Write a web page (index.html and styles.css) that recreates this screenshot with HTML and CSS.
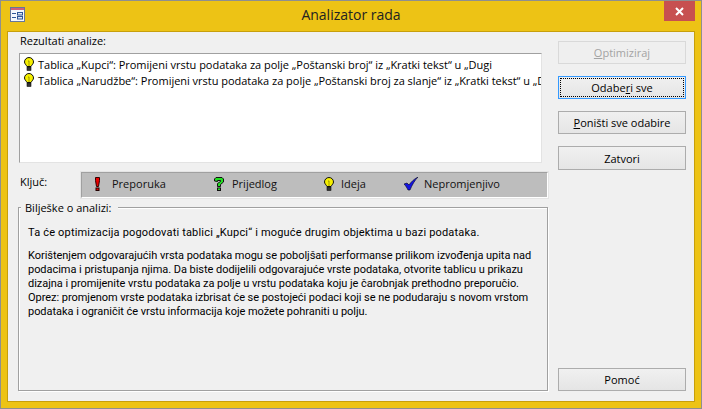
FILE: index.html
```html
<!DOCTYPE html>
<html lang="hr">
<head>
  <meta charset="UTF-8">
  <title>Analizator rada</title>
  <link rel="stylesheet" href="styles.css">
</head>
<body>

  <div class="window">
    <div class="title-bar">
      <svg class="app-icon" width="15" height="15" viewBox="0 0 15 15">
        <rect x="0.5" y="0.5" width="14" height="14" fill="#f4f7fc" stroke="#66779c"/>
        <rect x="1" y="1" width="13" height="2" fill="#d0607c"/>
        <path d="M2 6.500h4M2 10.500h4" stroke="#2f5597"/>
        <rect x="7.500" y="5.500" width="5" height="2.500" fill="#dfe8f5" stroke="#2f5597"/>
        <rect x="7.500" y="9.500" width="5" height="2.500" fill="#dfe8f5" stroke="#2f5597"/>
      </svg>
      <div class="title">Analizator rada</div>
      <div class="close-btn">
        <svg width="9" height="9" viewBox="0 0 9 9"><path d="M1 1l7 7M8 1l-7 7" stroke="#fff" stroke-width="2"/></svg>
      </div>
    </div>

    <div class="client">
      <div class="left">
        <div class="results-label">Rezultati analize:</div>
        <div class="list-box">
          <div class="list-row">
            <svg class="bulb" width="12" height="14" viewBox="0 0 12 14"><use href="#bulb"/></svg>
            <span>Tablica „Kupci“: Promijeni vrstu podataka za polje „Poštanski broj“ iz „Kratki tekst“ u „Dugi</span>
          </div>
          <div class="list-row">
            <svg class="bulb" width="12" height="14" viewBox="0 0 12 14"><use href="#bulb"/></svg>
            <span>Tablica „Narudžbe“: Promijeni vrstu podataka za polje „Poštanski broj za slanje“ iz „Kratki tekst“ u „D</span>
          </div>
        </div>

        <div class="key-row">
          <div class="key-label">Ključ:</div>
          <div class="key-bar">
            <div class="key-item item-1">
              <svg width="5" height="14" viewBox="0 0 5 14">
                <path d="M.5.5h4v3l-1 6h-2l-1-6z" fill="#e80000" stroke="#300"/>
                <rect x="1" y="11" width="3" height="2.500" fill="#e80000" stroke="#200"/>
              </svg>
              <span>Preporuka</span>
            </div>
            <div class="key-item item-2">
              <svg width="10" height="14" viewBox="0 0 10 14">
                <path d="M.5 4V2L2 .5h6L9.500 2v3L6.500 7.500v2h-3v-3L6.500 4.500v-1h-3v1z" fill="#22e022" stroke="#111"/>
                <rect x="3.500" y="11" width="3" height="2.500" fill="#22e022" stroke="#111"/>
              </svg>
              <span>Prijedlog</span>
            </div>
            <div class="key-item item-3">
              <svg width="12" height="14" viewBox="0 0 12 14"><use href="#bulb"/></svg>
              <span>Ideja</span>
            </div>
            <div class="key-item item-4">
              <svg width="14" height="14" viewBox="0 0 14 14">
                <path d="M0 7l3-1 2 2c2-3 5-6 9-8-3 3-6 8-8 13H4C3 11 2 9 0 7z" fill="#1414e0" stroke="#002" stroke-width="0.6"/>
              </svg>
              <span>Nepromjenjivo</span>
            </div>
          </div>
        </div>

        <div class="notes">
          <div class="notes-legend">Bilješke o analizi:</div>
          <p class="notes-lead">Ta će optimizacija pogodovati tablici „Kupci“ i moguće drugim objektima u bazi podataka.</p>
          <p>Korištenjem odgovarajućih vrsta podataka mogu se poboljšati performanse prilikom izvođenja upita nad podacima i pristupanja njima. Da biste dodijelili odgovarajuće vrste podataka, otvorite tablicu u prikazu dizajna i promijenite vrstu podataka za polje u vrstu podataka koju je čarobnjak prethodno preporučio. Oprez: promjenom vrste podataka izbrisat će se postojeći podaci koji se ne podudaraju s novom vrstom podataka i ograničit će vrstu informacija koje možete pohraniti u polju.</p>
        </div>
      </div>

      <div class="buttons">
        <button class="btn" disabled><u>O</u>ptimiziraj</button>
        <button class="btn focused"><span class="focus-ring">Odabe<u>r</u>i sve</span></button>
        <button class="btn"><u>P</u>oništi sve odabire</button>
        <button class="btn btn-close">Zatvori</button>
        <button class="btn btn-help">Pomoć</button>
      </div>
    </div>
  </div>

  <svg width="0" height="0" class="defs">
    <symbol id="bulb" viewBox="0 0 12 14">
      <path d="M6 .5a4.500 4.500 0 0 0-4.500 4.500c0 1.700 1.500 2.600 2.500 4.500h4c1-1.900 2.500-2.800 2.500-4.500A4.500 4.500 0 0 0 6 .5z" fill="#f6f000" stroke="#111"/>
      <rect x="4" y="10" width="4" height="3.500" fill="#333" stroke="#111" stroke-width="0.6"/>
      <path d="M5 4h1v5" stroke="#8a8400" fill="none" stroke-width="0.8"/>
    </symbol>
  </svg>

</body>
</html>
```

FILE: styles.css
```css
* { margin: 0; padding: 0; box-sizing: border-box; }
body {
  width: 702px;
  height: 409px;
  overflow: hidden;
  font-family: "Open Sans", sans-serif;
  font-size: 11px;
  color: #000;
}
.window {
  width: 702px;
  height: 409px;
  background: #edc315;
  border: 1px solid #8f8f8f;
  padding: 0 6px 6px;
  display: flex;
  flex-direction: column;
}
.title-bar {
  height: 30px;
  padding-bottom: 3px;
  display: flex;
  align-items: center;
  position: relative;
}
.app-icon {
  margin-left: 3px;
}
.title {
  flex: 1;
  text-align: center;
  font-size: 14px;
  color: #222;
  padding-right: 18px;
}
.close-btn {
  position: absolute;
  top: 0;
  right: 0;
  width: 31px;
  height: 20px;
  background: #c75050;
  display: flex;
  align-items: center;
  justify-content: center;
}
.client {
  flex: 1;
  background: #f0f0f0;
  border: 1px solid #c79f0b;
  display: flex;
  padding: 0 8px 10px 10px;
}
.left {
  width: 530px;
  display: flex;
  flex-direction: column;
}
.results-label {
  height: 21px;
  padding: 1px 0 0 2px;
  line-height: 16px;
}
.list-box {
  height: 110px;
  margin-right: 6px;
  margin-left: 1px;
  background: #fff;
  border: 1px solid #a0a0a0;
  border-right-color: #e3e3e3;
  border-bottom-color: #e3e3e3;
  padding: 2px 0 0 3px;
  overflow: hidden;
}
.list-row {
  height: 16px;
  display: flex;
  align-items: center;
  gap: 3px;
  letter-spacing: -0.02px;
  white-space: nowrap;
}
.bulb {
  flex: none;
}
.key-row {
  display: flex;
  margin-top: 9px;
}
.key-label {
  width: 63px;
  padding: 2px 0 0 2px;
  line-height: 16px;
}
.key-bar {
  flex: 1;
  height: 26px;
  padding-bottom: 3px;
  background: #bdbdbd;
  border: 1px solid #fff;
  border-top-color: #a0a0a0;
  border-left-color: #a0a0a0;
  outline: 1px solid #e4e4e4;
  display: flex;
  align-items: center;
}
.key-item {
  display: flex;
  align-items: center;
  color: #111;
}
.item-1 { margin-left: 13px; width: 119px; gap: 12px; }
.item-2 { width: 109px; gap: 8px; }
.item-3 { width: 81px; gap: 6px; }
.item-4 { gap: 6px; }
.notes {
  flex: 1;
  margin-top: 9px;
  position: relative;
  border: 1px solid #a0a0a0;
  box-shadow: 1px 1px 0 #fff, inset 1px 1px 0 #fff;
  padding: 18px 9px 0;
  font-family: "Roboto", sans-serif;
}
.notes-legend {
  position: absolute;
  top: -7px;
  left: 2px;
  background: #f0f0f0;
  padding: 0 6px 0 4px;
  line-height: 14px;
  font-family: "Open Sans", sans-serif;
}
.notes p {
  line-height: 14px;
  letter-spacing: -0.04px;
}
.notes p.notes-lead {
  margin-bottom: 9px;
  letter-spacing: 0.18px;
}
.buttons {
  flex: 1;
  display: flex;
  flex-direction: column;
  padding: 9px 0 0 10px;
  gap: 12px;
}
.btn {
  width: 128px;
  height: 23px;
  font: inherit;
  color: #000;
  background: linear-gradient(#f0f0f0, #e5e5e5);
  border: 1px solid #acacac;
}
.btn:disabled {
  background: #efefef;
  border-color: #d9d9d9;
  color: #a3a3a3;
}
.focused {
  border-color: #3399ff;
  padding: 1px;
}
.focus-ring {
  display: block;
  height: 100%;
  line-height: 17px;
  border: 1px dotted #000;
}
.btn-close {
  height: 24px;
}
.btn-help {
  margin-top: auto;
}
.defs {
  position: absolute;
}
```
